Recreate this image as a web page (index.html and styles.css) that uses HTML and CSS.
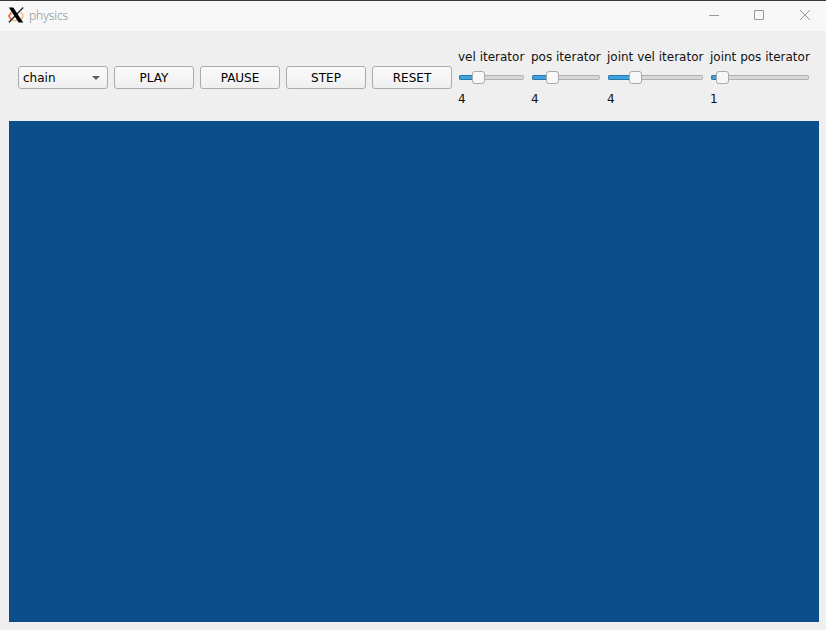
FILE: index.html
```html
<!DOCTYPE html>
<html lang="en">
<head>
<meta charset="utf-8">
<title>physics</title>
<link rel="stylesheet" href="styles.css">
</head>
<body>
<div class="window">
  <header class="titlebar">
    <svg class="logo" width="16" height="16" viewBox="0 0 16 16">
      <path d="M3.500 5.500L.8 9L3.500 13" fill="none" stroke="#ea6a3c" stroke-width="1.600"/>
      <path d="M3.500 13C8 14.500 15.200 12.500 15 9C14.800 7 14 6 12.800 5.500" fill="none" stroke="#f2b577" stroke-width="1.200"/>
      <path d="M15.200 .5L.8 15.500" stroke="#222" stroke-width="1.200"/>
      <path d="M.8 .5H5.300L15.200 15.500H10.700Z" fill="#000"/>
    </svg>
    <span class="title">physics</span>
    <svg class="controls" width="102" height="12" viewBox="0 0 102 12" fill="none" stroke="#999">
      <path d="M0 6.500H10"/>
      <path d="M45.500 1.500H54.500V10.500H45.500Z"/>
      <path d="M91 1L101 11M101 1L91 11"/>
    </svg>
  </header>
  <div class="toolbar">
    <div class="button combo"><span>chain</span><svg width="8" height="4" viewBox="0 0 8 4"><path d="M0 0H8L4 4Z" fill="#606060"/></svg></div>
    <button class="button">PLAY</button>
    <button class="button">PAUSE</button>
    <button class="button">STEP</button>
    <button class="button">RESET</button>
    <div class="setting vel">
      <span class="text">vel iterator</span>
      <div class="slider"><i class="fill"></i><i class="handle"></i><i class="rest"></i></div>
      <span class="text">4</span>
    </div>
    <div class="setting pos">
      <span class="text">pos iterator</span>
      <div class="slider"><i class="fill"></i><i class="handle"></i><i class="rest"></i></div>
      <span class="text">4</span>
    </div>
    <div class="setting joint-vel">
      <span class="text">joint vel iterator</span>
      <div class="slider"><i class="fill"></i><i class="handle"></i><i class="rest"></i></div>
      <span class="text">4</span>
    </div>
    <div class="setting joint-pos">
      <span class="text">joint pos iterator</span>
      <div class="slider"><i class="fill"></i><i class="handle"></i><i class="rest"></i></div>
      <span class="text">1</span>
    </div>
  </div>
  <main class="scene"></main>
</div>
</body>
</html>
```
FILE: styles.css
```css
* { box-sizing: border-box; }
body { margin: 0; background: #efefef; overflow: hidden; font: 12px "DejaVu Sans", sans-serif; color: #111; }
.window { width: 826px; height: 630px; display: flex; flex-direction: column; }
.titlebar { height: 31px; background: #f8f8f8; border-top: 1px solid #3c363e; display: flex; align-items: center; padding: 0 15px 2px 8px; }
.title { margin-left: 5px; padding-top: 2px; font: 12px/16px "Noto Sans", sans-serif; letter-spacing: -0.1px; color: #8b9299; font-weight: 300; }
.controls { margin-left: auto; }
.toolbar { height: 90px; display: flex; align-items: center; gap: 6px; padding: 3px 0 0 18px; }
.button { flex: none; width: 80px; height: 23px; margin: 0; padding: 1px 0 0; border: 1px solid #ababab; border-radius: 3px; background: linear-gradient(#f9f9f9, #f5f5f5 50%, #efefef); font: inherit; line-height: 20px; color: #000; text-align: center; }
.combo { width: 90px; display: flex; align-items: center; justify-content: space-between; padding: 0 7px 0 4px; }
.combo span { padding-top: 1px; }
.setting { flex: none; height: 59px; display: flex; flex-direction: column; padding-top: 2px; }
.text { line-height: 15px; height: 15px; white-space: nowrap; }
.slider { height: 13px; display: flex; align-items: center; padding: 0 1px; margin: 6px 0 8px; }
.fill, .rest { height: 5px; border: 1px solid #b0b0b0; background: #d8d8d8; }
.fill { background: #41a1df; border-color: #2878ad; border-right: 0; border-radius: 2px 0 0 2px; }
.rest { flex: 1; border-left: 0; border-radius: 0 2px 2px 0; }
.handle { flex: none; width: 13px; height: 13px; border: 1px solid #aaa; border-radius: 3px; background: #f8f8f8; }
.vel { width: 67px; }
.pos { width: 70px; }
.joint-vel { width: 97px; }
.joint-pos { width: 100px; }
.vel .fill { width: 13px; }
.pos .fill { width: 14px; }
.joint-vel .fill { width: 21px; }
.joint-pos .fill { width: 5px; }
.scene { width: 810px; height: 501px; margin-left: 9px; background: #0c4d8b; }
```
